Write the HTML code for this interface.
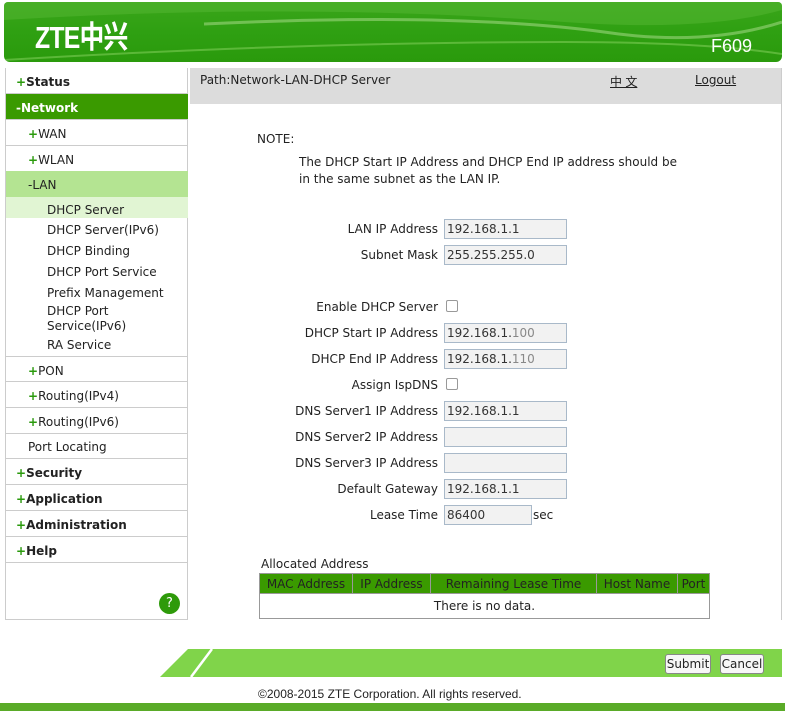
<!DOCTYPE html>
<html><head><meta charset="utf-8"><style>
*{margin:0;padding:0;box-sizing:border-box}
body{width:785px;height:716px;background:#fff;font-family:"DejaVu Sans","Liberation Sans",sans-serif;font-size:12px;color:#222;position:relative;overflow:hidden}
.abs{position:absolute}
#hdr{left:4px;top:2px;width:778px;height:60px;border-radius:4px 4px 6px 6px;background:linear-gradient(180deg,#3aa51a 0%,#2fa012 50%,#2a9a0c 100%);overflow:hidden}
#side{left:5px;top:68px;width:183px;height:552px;border:1px solid #ccc;border-top:none}
.it{position:absolute;left:0;width:182px;height:26px;line-height:28px;border-bottom:1px solid #ccc;font-size:12px}
.b{font-weight:bold;padding-left:10px}
.s{padding-left:22px}
.pl{color:#2a9a0c;font-weight:bold}
.sub{position:absolute;left:41px;font-size:12px;margin-top:1px}
.lbl{position:absolute;right:347px;font-size:12px;text-align:right;white-space:nowrap;margin-top:1px}
.inp{position:absolute;left:444px;width:123px;height:20px;border:1px solid #a9b9c9;background:#f2f2f2;font-size:12px;line-height:19px;padding-left:2px;color:#333}
.cb{position:absolute;left:446px;width:12px;height:12px;border:1px solid #999;border-radius:2px;background:#fff}
table{table-layout:fixed}
th{background:#3a9a00;color:#222;font-weight:normal;height:20px;border:1px solid #999;font-size:12px;white-space:nowrap;overflow:hidden;padding:0}
</style></head><body>
<div id="hdr" class="abs">
<svg width="778" height="60" style="position:absolute;left:0;top:0"><path d="M0 18 Q300 0 560 20 Q700 30 778 8 L778 0 L0 0Z" fill="#55b833" opacity=".5"/><path d="M200 22 Q450 10 600 30 Q700 45 778 20" stroke="#9bd67d" stroke-width="3" fill="none" opacity=".6"/><path d="M0 58 Q300 40 560 40 Q700 40 778 52" stroke="#7ccc55" stroke-width="2" fill="none" opacity=".6"/></svg>
<div class="abs" style="left:31px;top:19px;color:#fff;font-weight:bold;font-size:31px;line-height:34px;font-family:'Liberation Sans','Noto Sans CJK SC',sans-serif;letter-spacing:-1px;transform:scaleX(.8);transform-origin:left">ZTE中兴</div>
<div class="abs" style="left:707px;top:34px;color:#fff;font-size:18px;font-family:'Liberation Sans',sans-serif">F609</div>
</div>
<div id="side" class="abs">
<div class="it b" style="top:0"><span class="pl">+</span>Status</div>
<div class="it b" style="top:26px;background:#3a9a00;color:#fff">-Network</div>
<div class="it s" style="top:52px"><span class="pl">+</span>WAN</div>
<div class="it s" style="top:78px"><span class="pl">+</span>WLAN</div>
<div class="it s" style="top:103px;background:#b4e492;border-bottom:none">-LAN</div>
<div class="abs" style="left:0;top:129px;width:182px;height:21px;background:#e1f5d3"></div>
<div class="sub" style="top:134px">DHCP Server</div>
<div class="sub" style="top:154px">DHCP Server(IPv6)</div>
<div class="sub" style="top:175px">DHCP Binding</div>
<div class="sub" style="top:196px">DHCP Port Service</div>
<div class="sub" style="top:217px">Prefix Management</div>
<div class="sub" style="top:235px;line-height:15px">DHCP Port<br>Service(IPv6)</div>
<div class="sub" style="top:269px">RA Service</div>
<div class="it s" style="top:288px;border-top:1px solid #ccc"><span class="pl">+</span>PON</div>
<div class="it s" style="top:314px"><span class="pl">+</span>Routing(IPv4)</div>
<div class="it s" style="top:340px"><span class="pl">+</span>Routing(IPv6)</div>
<div class="it s" style="top:365px">Port Locating</div>
<div class="it b" style="top:391px"><span class="pl">+</span>Security</div>
<div class="it b" style="top:417px"><span class="pl">+</span>Application</div>
<div class="it b" style="top:443px"><span class="pl">+</span>Administration</div>
<div class="it b" style="top:469px"><span class="pl">+</span>Help</div>
<div class="abs" style="left:153px;top:525px;width:21px;height:21px;border-radius:50%;background:#2e9a0a;color:#fff;text-align:center;line-height:21px;font-size:13px">?</div>
</div>
<div class="abs" style="left:190px;top:68px;width:591px;height:36px;background:#dcdcdc"></div>
<div class="abs" style="left:781px;top:68px;width:1px;height:552px;background:#ccc"></div>
<div class="abs" style="left:200px;top:73px;font-size:12px">Path:Network-LAN-DHCP Server</div>
<div class="abs" style="left:610px;top:73px;font-size:12px;text-decoration:underline;font-family:'Liberation Sans','Noto Sans CJK SC',sans-serif">中 文</div>
<div class="abs" style="left:695px;top:73px;font-size:12px;text-decoration:underline">Logout</div>
<div class="abs" style="left:257px;top:132px">NOTE:</div>
<div class="abs" style="left:299px;top:154px;line-height:17px;font-size:12px">The DHCP Start IP Address and DHCP End IP address should be<br>in the same subnet as the LAN IP.</div>
<div class="lbl" style="top:221px">LAN IP Address</div><div class="inp" style="top:219px">192.168.1.1</div>
<div class="lbl" style="top:247px">Subnet Mask</div><div class="inp" style="top:245px">255.255.255.0</div>
<div class="lbl" style="top:299px">Enable DHCP Server</div><div class="cb" style="top:300px"></div>
<div class="lbl" style="top:325px">DHCP Start IP Address</div><div class="inp" style="top:323px">192.168.1.<span style="color:#888">100</span></div>
<div class="lbl" style="top:351px">DHCP End IP Address</div><div class="inp" style="top:349px">192.168.1.<span style="color:#888">110</span></div>
<div class="lbl" style="top:377px">Assign IspDNS</div><div class="cb" style="top:378px"></div>
<div class="lbl" style="top:403px">DNS Server1 IP Address</div><div class="inp" style="top:401px">192.168.1.1</div>
<div class="lbl" style="top:429px">DNS Server2 IP Address</div><div class="inp" style="top:427px"></div>
<div class="lbl" style="top:455px">DNS Server3 IP Address</div><div class="inp" style="top:453px"></div>
<div class="lbl" style="top:481px">Default Gateway</div><div class="inp" style="top:479px">192.168.1.1</div>
<div class="lbl" style="top:507px">Lease Time</div><div class="inp" style="top:505px;width:88px">86400</div>
<div class="abs" style="left:533px;top:508px">sec</div>
<div class="abs" style="left:261px;top:557px">Allocated Address</div>
<table class="abs" style="left:259px;top:573px;width:451px;border-collapse:collapse">
<tr><th style="width:93px">MAC Address</th><th style="width:78px">IP Address</th><th style="width:166px">Remaining Lease Time</th><th style="width:81px">Host Name</th><th>Port</th></tr>
<tr><td colspan="5" style="height:25px;text-align:center;border:1px solid #999;font-size:12px">There is no data.</td></tr>
</table>
<svg class="abs" style="left:160px;top:649px" width="622" height="28"><path d="M28 0 L622 0 L622 28 L0 28Z" fill="#80d44a"/><path d="M52 0 L31 28" stroke="#fff" stroke-width="2.5"/></svg>
<div class="abs" style="left:665px;top:654px;width:46px;height:20px;border:1px solid #888;border-radius:3px;background:#f7f7f7;text-align:center;line-height:18px;font-size:12px">Submit</div>
<div class="abs" style="left:720px;top:654px;width:44px;height:20px;border:1px solid #888;border-radius:3px;background:#f7f7f7;text-align:center;line-height:18px;font-size:12px">Cancel</div>
<div class="abs" style="left:258px;top:687px;font-family:'Liberation Sans',sans-serif;font-size:12px">©2008-2015 ZTE Corporation. All rights reserved.</div>
<div class="abs" style="left:0;top:703px;width:785px;height:8px;background:#5aab28"></div>
</body></html>
